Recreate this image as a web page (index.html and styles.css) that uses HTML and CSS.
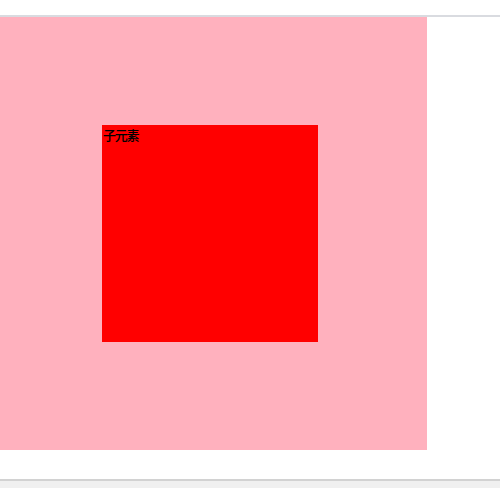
FILE: index.html
```html
<!DOCTYPE html>
<html lang="zh">
<head>
<meta charset="utf-8">
<link rel="stylesheet" href="styles.css">
</head>
<body>
<div class="top"></div>
<main class="stage">
  <div class="parent">
    <div class="child">子元素</div>
  </div>
</main>
<div class="bottom"></div>
</body>
</html>
```
FILE: styles.css
```css
html, body {
  margin: 0;
  padding: 0;
  background: #ffffff;
  width: 500px;
  height: 488px;
  overflow: hidden;
}
body {
  display: flex;
  flex-direction: column;
}
.top {
  height: 15px;
  border-bottom: 2px solid #d9dbe0;
  flex: none;
}
.stage {
  flex: none;
  height: 462px;
}
.parent {
  width: 427px;
  height: 433px;
  background: #ffb1be;
  padding: 108px 0 0 102px;
  box-sizing: border-box;
}
.child {
  width: 216px;
  height: 217px;
  background: #ff0000;
  color: #000000;
  font-family: "Noto Sans CJK SC", "Noto Sans", sans-serif;
  font-size: 13px;
  font-weight: 500;
  line-height: 19px;
  letter-spacing: -1.2px;
  padding-left: 1px;
  box-sizing: border-box;
}
.bottom {
  flex: 1;
  border-top: 2px solid #d2d2d2;
  background: #f0f0f0;
}
```
